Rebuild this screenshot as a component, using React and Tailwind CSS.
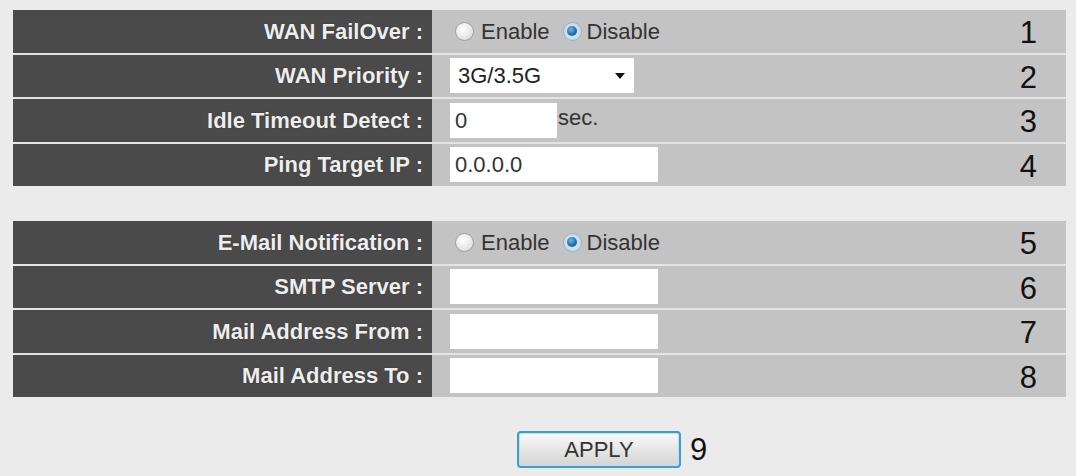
import React from "react";

function Radio({ checked }) {
  return (
    <span
      className={
        "inline-flex shrink-0 items-center justify-center w-[19px] h-[19px] rounded-full border " +
        (checked
          ? "border-[#98b3c8] bg-[radial-gradient(circle,#dde9f2_0%,#c2d4e2_100%)]"
          : "border-[#a0a0a0] bg-[radial-gradient(circle_at_40%_35%,#ffffff_0%,#e2e2e2_70%,#c4c4c4_100%)]")
      }
    >
      {checked && (
        <span className="w-[10px] h-[10px] rounded-full bg-[radial-gradient(circle_at_40%_35%,#72b6e6_0%,#1d6ca8_60%,#134d7d_100%)]" />
      )}
    </span>
  );
}

function RadioGroup() {
  return (
    <div className="flex items-center ml-[5px] text-[22px] text-[#333333]">
      <Radio checked={false} />
      <span className="ml-[7px]">Enable</span>
      <span className="ml-[13px] flex items-center">
        <Radio checked={true} />
      </span>
      <span className="ml-[5px]">Disable</span>
    </div>
  );
}

function TextBox({ width, value }) {
  return (
    <div
      className="h-[35px] bg-white flex items-center pl-[5px] text-[22px] text-[#333333]"
      style={{ width }}
    >
      {value}
    </div>
  );
}

function Row({ label, num, children }) {
  return (
    <div className="flex h-[42.5px]">
      <div className="w-[419px] bg-[#4a4a4a] flex items-center justify-end pr-[9px] text-[22px] font-bold text-[#eeeeee] [text-shadow:0_0_1px_#222]">
        {label}
      </div>
      <div className="flex-1 bg-[#c3c3c3] flex items-center pl-[18px] pr-[29px]">
        <div className="flex-1 flex items-center h-full">{children}</div>
        <span className="text-[31px] text-[#111111] leading-none mt-[3px]">{num}</span>
      </div>
    </div>
  );
}

export default function App() {
  return (
    <div
      className="w-[1076px] h-[476px] bg-[#ebebeb] pt-[10px] pl-[13px] overflow-hidden"
      style={{ fontFamily: '"Liberation Sans", Arial, sans-serif' }}
    >
      <div className="w-[1053px] flex flex-col gap-[2px] bg-[#e4e4e4]">
        <Row label="WAN FailOver :" num="1">
          <RadioGroup />
        </Row>
        <Row label="WAN Priority :" num="2">
          <div className="w-[184px] h-[35px] bg-white flex items-center justify-between pl-[8px] pr-[9px] text-[22px] text-[#222222]">
            <span>3G/3.5G</span>
            <svg width="10" height="6" viewBox="0 0 10 6">
              <path d="M0 0 L10 0 L5 6 Z" fill="#111" />
            </svg>
          </div>
        </Row>
        <Row label="Idle Timeout Detect :" num="3">
          <TextBox width="107px" value="0" />
          <span className="self-end mb-[8px] ml-[1px] text-[22px] text-[#333333]">sec.</span>
        </Row>
        <Row label="Ping Target IP :" num="4">
          <TextBox width="208px" value="0.0.0.0" />
        </Row>
      </div>

      <div className="w-[1053px] mt-[35px] flex flex-col gap-[2px] bg-[#e4e4e4]">
        <Row label="E-Mail Notification :" num="5">
          <RadioGroup />
        </Row>
        <Row label="SMTP Server :" num="6">
          <TextBox width="208px" value="" />
        </Row>
        <Row label="Mail Address From :" num="7">
          <TextBox width="208px" value="" />
        </Row>
        <Row label="Mail Address To :" num="8">
          <TextBox width="208px" value="" />
        </Row>
      </div>

      <div className="flex items-center mt-[34px] pl-[504px]">
        <button className="w-[164px] h-[37px] rounded-[4px] border-2 border-[#3f9ccc] shadow-[inset_0_0_0_1px_#bfe0f0] bg-[linear-gradient(#fbfbfb,#e6e6e6_50%,#d4d4d4)] text-[22px] text-[#333333] flex items-center justify-center">
          APPLY
        </button>
        <span className="ml-[9px] text-[31px] text-[#111111] leading-none">9</span>
      </div>
    </div>
  );
}
